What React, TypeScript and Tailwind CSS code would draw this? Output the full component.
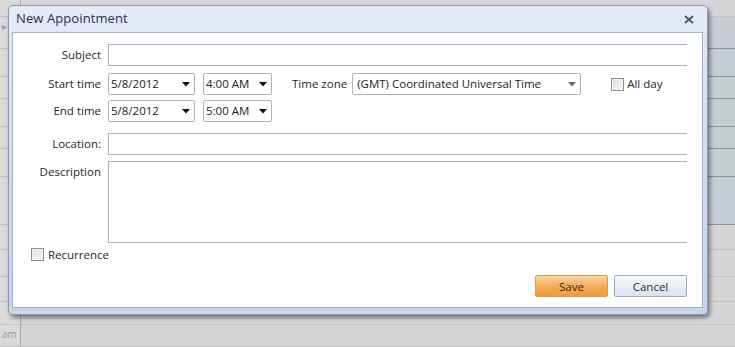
import { ReactNode } from 'react'

const FONT = { fontFamily: '"Open Sans", "Noto Sans", sans-serif' }

// calendar rows peeking out behind the dialog
const ROWS = [
  { h: 17, tint: false },
  { h: 32, tint: true },
  { h: 28, tint: true },
  { h: 22, tint: true },
  { h: 28, tint: true },
  { h: 22, tint: true },
  { h: 28, tint: true },
  { h: 48, tint: true },
  { h: 25, tint: false },
  { h: 27, tint: false },
  { h: 25, tint: false },
  { h: 23, tint: false },
  { h: 22, tint: false },
]

function Arrow({ light }: { light?: boolean }) {
  return (
    <svg width="8" height="5" viewBox="0 0 8 5" className="shrink-0">
      <path d="M0 0 H8 L4 4.5 Z" fill={light ? '#6d6d6d' : '#111'} />
    </svg>
  )
}

function Select({ value, w, light }: { value: string; w: string; light?: boolean }) {
  return (
    <div
      className={`${w} h-[22px] flex items-center justify-between pl-[2px] pr-[4px] bg-white border border-[#abb3bf] rounded-[2px] text-[11.5px] text-[#1b1b1b]`}
    >
      <span className={light ? 'pl-[2px]' : ''}>{value}</span>
      <Arrow light={light} />
    </div>
  )
}

function Check() {
  return (
    <span className="inline-block w-[13px] h-[13px] border border-[#8e8f8f] bg-gradient-to-br from-[#dcdcdc] to-[#fbfbfb] shadow-[inset_0_0_0_1px_#f4f4f4]" />
  )
}

function Row({ label, className, children }: { label: string; className?: string; children: ReactNode }) {
  return (
    <div className={`flex items-start ${className ?? ''}`}>
      <div className="w-[89px] shrink-0 pr-[1px] text-right text-[11.5px] leading-[22px] text-[#2a2330]">
        {label}
      </div>
      <div className="ml-[6px] flex items-center">{children}</div>
    </div>
  )
}

export default function App() {
  return (
    <div className="relative w-[735px] h-[347px] overflow-hidden bg-[#d6d6d6]" style={FONT}>
      {/* calendar behind */}
      <div className="flex h-full">
        <div className="w-[21px] shrink-0 border-r border-[#a9a9a9] bg-[#dadada] flex flex-col">
          {ROWS.map((r, i) => (
            <div
              key={i}
              style={{ height: r.h }}
              className="border-b border-[#c4c4c4] text-[10px] leading-[12px] text-[#9a9a9a] pl-[2px] pt-[3px]"
            >
              {i === 1 ? '▸' : i === ROWS.length - 1 ? 'am' : ''}
            </div>
          ))}
        </div>
        <div className="flex-1 flex flex-col">
          {ROWS.map((r, i) => (
            <div
              key={i}
              style={{ height: r.h }}
              className={`border-b ${r.tint ? 'bg-[#c6ccd4] border-[#8d949c]' : 'bg-[#d6d6d6] border-[#c2c2c2]'}`}
            />
          ))}
        </div>
      </div>

      {/* dialog */}
      <div className="absolute left-[8px] top-[5px] w-[700px] h-[310px] rounded-[5px] border border-[#8a9bb3] bg-gradient-to-b from-[#e3ebf6] via-[#cfdcee] to-[#c6d5ea] shadow-[2px_3px_4px_rgba(0,0,0,0.45)] flex flex-col">
        <div className="h-[26px] flex items-center justify-between pl-[7px] pr-[13px]">
          <span className="text-[13px] text-[#1f3453] tracking-[0.1px]">New Appointment</span>
          <svg width="10" height="9" viewBox="0 0 10 9">
            <path d="M1 1 L9 8 M9 1 L1 8" stroke="#4f5f78" strokeWidth="2.2" />
          </svg>
        </div>
        <div className="ml-[3px] mr-[4px] mb-[6px] flex-1 border border-[#a1b3cb] bg-white flex flex-col pt-[11px]">
          <Row label="Subject">
            <div className="w-[579px] h-[22px] border border-r-0 border-[#abb3bf]" />
          </Row>
          <Row label="Start time" className="mt-[7px]">
            <Select value="5/8/2012" w="w-[87px]" />
            <div className="w-[8px]" />
            <Select value="4:00 AM" w="w-[69px]" />
            <span className="ml-[20px] mr-[5px] text-[11.5px] text-[#2a2330]">Time zone</span>
            <Select value="(GMT) Coordinated Universal Time" w="w-[229px]" light />
            <span className="ml-[30px] flex items-center gap-[3px] text-[11.5px] text-[#2a2330]">
              <Check />
              All day
            </span>
          </Row>
          <Row label="End time" className="mt-[5px]">
            <Select value="5/8/2012" w="w-[87px]" />
            <div className="w-[8px]" />
            <Select value="5:00 AM" w="w-[69px]" />
          </Row>
          <Row label="Location:" className="mt-[11px]">
            <div className="w-[579px] h-[22px] border border-r-0 border-[#abb3bf]" />
          </Row>
          <Row label="Description" className="mt-[6px]">
            <div className="w-[579px] h-[82px] border border-r-0 border-[#abb3bf]" />
          </Row>
          <div className="mt-[3px] ml-[18px] flex items-center gap-[4px] text-[11.5px] text-[#2a2330]">
            <Check />
            Recurrence
          </div>
          <div className="mt-[12px] flex justify-end gap-[6px] pr-[15px]">
            <button className="w-[73px] h-[22px] rounded-[2px] border border-[#d89a55] bg-gradient-to-b from-[#fcd7a2] via-[#f7ab5a] to-[#f59a3c] text-[11.5px] text-[#3a2a1a]">
              Save
            </button>
            <button className="w-[73px] h-[22px] rounded-[2px] border border-[#98a9c2] bg-gradient-to-b from-[#f6f8fb] via-[#e9eef5] to-[#d9e2ee] text-[11.5px] text-[#2a2f38]">
              Cancel
            </button>
          </div>
        </div>
      </div>
    </div>
  )
}
